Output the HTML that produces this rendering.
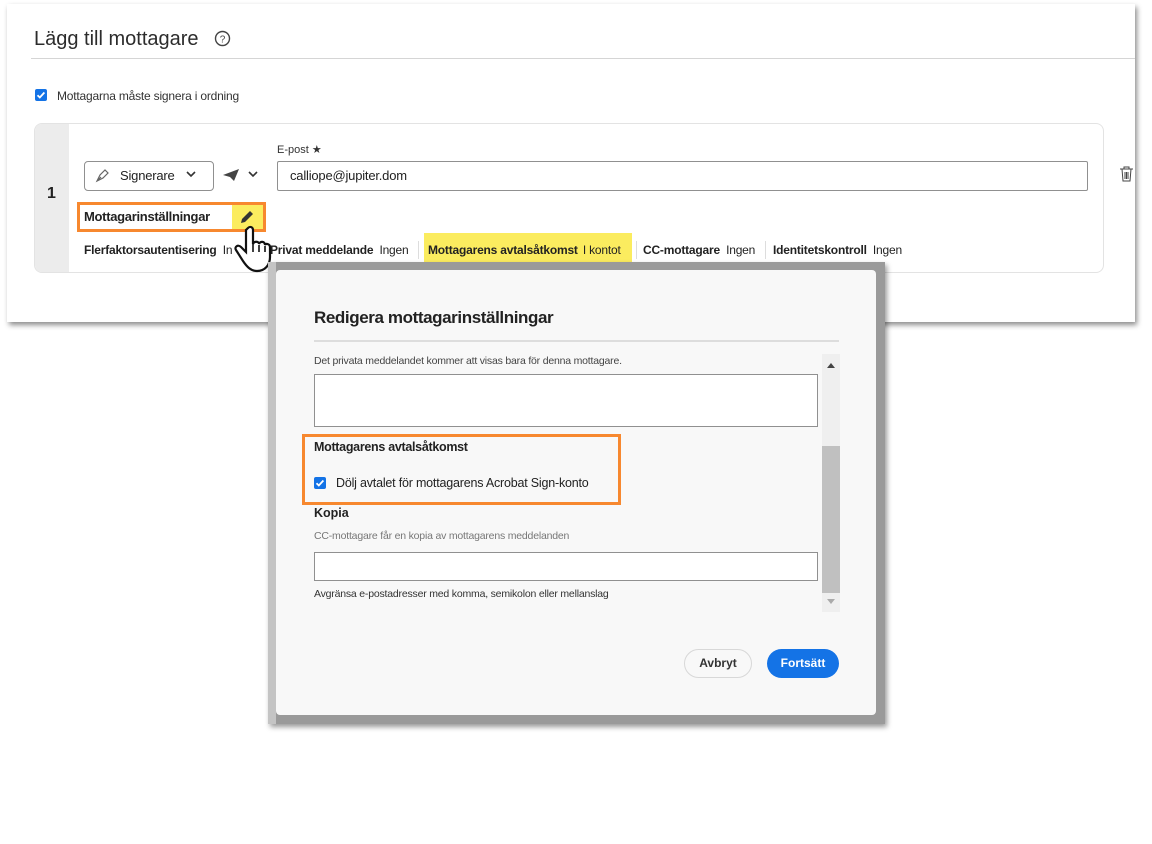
<!DOCTYPE html>
<html><head><meta charset="utf-8"><style>
*{box-sizing:border-box;margin:0;padding:0}
body{width:1152px;height:844px;background:#fff;font-family:"Liberation Sans",sans-serif;color:#222;position:relative;overflow:hidden}
.a{position:absolute}
.b{font-weight:bold}
.t{font-size:12px;white-space:nowrap;letter-spacing:-0.2px}
</style></head><body>
<div class="a" style="left:7px;top:4px;width:1128px;height:318px;background:#fff;box-shadow:2px 3px 5px rgba(0,0,0,.45)"></div>
<div class="a" style="left:34px;top:28px;font-size:20px;color:#2c2c2c">Lägg till mottagare</div>
<svg class="a" style="left:214px;top:30px" width="17" height="17" viewBox="0 0 17 17"><circle cx="8.5" cy="8.5" r="7" fill="none" stroke="#444" stroke-width="1.4"/><text x="8.5" y="12.5" font-size="10" text-anchor="middle" font-family="Liberation Sans" fill="#444">?</text></svg>
<div class="a" style="left:31px;top:58px;width:1104px;height:1px;background:#d5d5d5"></div>
<svg class="a" style="left:35px;top:89px" width="12" height="12"><rect width="12" height="12" rx="2" fill="#1473e6"/><path d="M2.5 6.2l2.3 2.3 4.6-5" stroke="#fff" stroke-width="1.8" fill="none"/></svg>
<div class="a" style="left:57px;top:89px;font-size:12px;color:#333;letter-spacing:-0.2px">Mottagarna måste signera i ordning</div>
<div class="a" style="left:34px;top:123px;width:1070px;height:150px;border:1px solid #e3e3e3;border-radius:8px;overflow:hidden;background:#fff"><div style="width:34px;height:100%;background:#ececec"></div></div>
<div class="a b" style="left:47px;top:185px;font-size:16px">1</div>
<div class="a" style="left:277px;top:143px;font-size:11px;color:#333">E-post ★</div>
<div class="a" style="left:84px;top:161px;width:130px;height:30px;border:1px solid #909090;border-radius:4px"></div>
<svg class="a" style="left:94px;top:166px" width="18" height="18" viewBox="0 0 18 18"><path d="M3 15l3-6 5-5 3 3-5 5z M3 15l4-4" stroke="#666" stroke-width="1.2" fill="none"/></svg>
<div class="a" style="left:120px;top:168px;font-size:13px;letter-spacing:-0.2px">Signerare</div>
<svg class="a" style="left:185px;top:170px" width="12" height="10"><path d="M2 2l4 4 4-4" stroke="#333" stroke-width="1.6" fill="none"/></svg>
<svg class="a" style="left:222px;top:168px" width="18" height="14"><path d="M1 7L17 1 12 13 8 9z" fill="#444"/></svg>
<svg class="a" style="left:247px;top:170px" width="12" height="10"><path d="M2 2l4 4 4-4" stroke="#333" stroke-width="1.6" fill="none"/></svg>
<div class="a" style="left:277px;top:161px;width:811px;height:30px;border:1px solid #909090;border-radius:2px"></div>
<div class="a" style="left:290px;top:168px;font-size:13px;letter-spacing:-0.2px">calliope@jupiter.dom</div>
<svg class="a" style="left:1119px;top:166px" width="15" height="16"><path d="M1 3h13M5 3V1h5v2M3 3l1 12h7l1-12M6 6v7M7.5 6v7M9 6v7" stroke="#444" stroke-width="1" fill="none"/></svg>
<div class="a" style="left:77px;top:202px;width:189px;height:30px;border:3px solid #f7882f;background:#fff"></div>
<div class="a" style="left:232px;top:205px;width:31px;height:24px;background:#fbec5f"></div>
<div class="a b" style="left:84px;top:209px;font-size:13px;letter-spacing:-0.3px">Mottagarinställningar</div>
<svg class="a" style="left:238px;top:208px" width="18" height="18"><path d="M3 15l1-4 8-8 3 3-8 8z" fill="#333"/></svg>
<div class="a" style="left:424px;top:233px;width:208px;height:29px;background:#fbec5f"></div>
<div class="a t" style="top:243px;left:84px"><span class="b">Flerfaktorsautentisering</span> <span style="margin-left:3px">In</span></div>
<div class="a t" style="top:243px;left:270px"><span class="b">Privat meddelande</span> <span style="margin-left:3px">Ingen</span></div>
<div class="a" style="left:418px;top:241px;width:1px;height:18px;background:#ddd"></div>
<div class="a t" style="top:243px;left:428px"><span class="b">Mottagarens avtalsåtkomst</span> <span style="margin-left:2px">I kontot</span></div>
<div class="a" style="left:636px;top:241px;width:1px;height:18px;background:#ddd"></div>
<div class="a t" style="top:243px;left:643px"><span class="b">CC-mottagare</span> <span style="margin-left:3px">Ingen</span></div>
<div class="a" style="left:765px;top:241px;width:1px;height:18px;background:#ddd"></div>
<div class="a t" style="top:243px;left:773px"><span class="b">Identitetskontroll</span> <span style="margin-left:3px">Ingen</span></div>
<svg class="a" style="left:230px;top:224px" width="46" height="50" viewBox="0 0 46 50"><path d="M18 4c2-2 5-1 5 2v14c1-3 6-3 6 0 1-3 6-3 6 1 1-2 5-1 5 2v10c0 8-5 14-13 14-6 0-10-4-14-10L6 26c-2-3 2-6 5-3l5 5V6z" fill="#fff" stroke="#111" stroke-width="2.2"/><path d="M23 20v8M29 21v7M35 22v6" stroke="#111" stroke-width="1.6"/></svg>
<div class="a" style="left:268px;top:262px;width:617px;height:462px;background:#9a9a9a;box-shadow:2px 3px 5px rgba(0,0,0,.4)"></div>
<div class="a" style="left:268px;top:262px;width:8px;height:462px;background:#c4c4c4"></div>
<div class="a" style="left:276px;top:270px;width:600px;height:445px;background:#f8f8f8;border-radius:4px"></div>
<div class="a" style="left:314px;top:308px;font-size:17px;color:#222;font-weight:bold;letter-spacing:-0.4px">Redigera mottagarinställningar</div>
<div class="a" style="left:314px;top:340px;width:525px;height:2px;background:#ddd"></div>
<div class="a" style="left:314px;top:355px;font-size:10.5px;color:#444;letter-spacing:-0.2px">Det privata meddelandet kommer att visas bara för denna mottagare.</div>
<div class="a" style="left:314px;top:374px;width:504px;height:53px;border:1px solid #909090;background:#fff"></div>
<div class="a" style="left:822px;top:354px;width:18px;height:258px;background:#efefef"></div>
<div class="a" style="left:822px;top:446px;width:18px;height:147px;background:#c0c0c0"></div>
<svg class="a" style="left:826px;top:362px" width="10" height="8"><path d="M1 6h8L5 1z" fill="#444"/></svg>
<svg class="a" style="left:826px;top:598px" width="10" height="8"><path d="M1 1h8L5 6z" fill="#aaa"/></svg>
<div class="a" style="left:302px;top:434px;width:319px;height:71px;border:3px solid #f7882f"></div>
<div class="a b" style="left:314px;top:440px;font-size:12.5px;letter-spacing:-0.3px">Mottagarens avtalsåtkomst</div>
<svg class="a" style="left:314px;top:477px" width="12" height="12"><rect width="12" height="12" rx="2" fill="#1473e6"/><path d="M2.5 6.2l2.3 2.3 4.6-5" stroke="#fff" stroke-width="1.8" fill="none"/></svg>
<div class="a" style="left:336px;top:476px;font-size:12.5px;letter-spacing:-0.2px">Dölj avtalet för mottagarens Acrobat Sign-konto</div>
<div class="a b" style="left:314px;top:506px;font-size:12.5px">Kopia</div>
<div class="a" style="left:314px;top:530px;font-size:10.5px;color:#777;letter-spacing:-0.2px">CC-mottagare får en kopia av mottagarens meddelanden</div>
<div class="a" style="left:314px;top:552px;width:504px;height:29px;border:1px solid #909090;background:#fff"></div>
<div class="a" style="left:314px;top:588px;font-size:10.5px;color:#333;letter-spacing:-0.2px">Avgränsa e-postadresser med komma, semikolon eller mellanslag</div>
<div class="a b" style="left:684px;top:649px;width:68px;height:29px;border:1px solid #d8d8d8;border-radius:15px;font-size:12px;text-align:center;line-height:27px;color:#333">Avbryt</div>
<div class="a b" style="left:767px;top:649px;width:72px;height:29px;border-radius:15px;background:#1473e6;color:#fff;font-size:12px;text-align:center;line-height:29px">Fortsätt</div>
</body></html>
